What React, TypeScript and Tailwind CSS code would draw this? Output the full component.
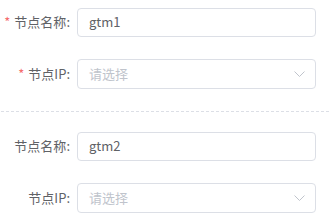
import { ReactNode } from "react";

function Row({ label, required, children }: { label: string; required?: boolean; children: ReactNode }) {
    return (
        <div className="flex items-center h-[30px]">
            <label className="w-[77px] shrink-0 pr-[7px] text-right text-[13px] text-[#606266] whitespace-nowrap">
                {required && <span className="text-[#f56c6c] mr-[4px]">*</span>}
                {label}:
            </label>
            <div className="flex-1">{children}</div>
        </div>
    );
}

function TextInput({ value }: { value: string }) {
    return (
        <div className="h-[29px] flex items-center border border-[#dcdfe6] rounded-[4px] px-[11px] text-[13px] text-[#606266] bg-white">
            {value}
        </div>
    );
}

function SelectInput() {
    return (
        <div className="h-[30px] flex items-center justify-between border border-[#dcdfe6] rounded-[4px] pl-[11px] pr-[10px] text-[13px] text-[#c0c4cc] bg-white">
            <span>请选择</span>
            <svg width="11" height="7" viewBox="0 0 11 7" fill="none">
                <path d="M0.5 0.5 L5.5 5.5 L10.5 0.5" stroke="#c0c4cc" strokeWidth="1" />
            </svg>
        </div>
    );
}

export default function App() {
    return (
        <div
            className="w-[329px] h-[222px] bg-white pt-[7px] pr-[13px] overflow-hidden"
            style={{ fontFamily: '"Noto Sans CJK SC", "Noto Sans", sans-serif' }}
        >
            <Row label="节点名称" required>
                <TextInput value="gtm1" />
            </Row>
            <div className="mt-[22px]">
                <Row label="节点IP" required>
                    <SelectInput />
                </Row>
            </div>
            <div className="mt-[22px] mr-[-13px] ml-[1px] border-t border-dashed border-[#dcdfe6]" />
            <div className="mt-[19px]">
                <Row label="节点名称">
                    <TextInput value="gtm2" />
                </Row>
            </div>
            <div className="mt-[22px]">
                <Row label="节点IP">
                    <SelectInput />
                </Row>
            </div>
        </div>
    );
}
